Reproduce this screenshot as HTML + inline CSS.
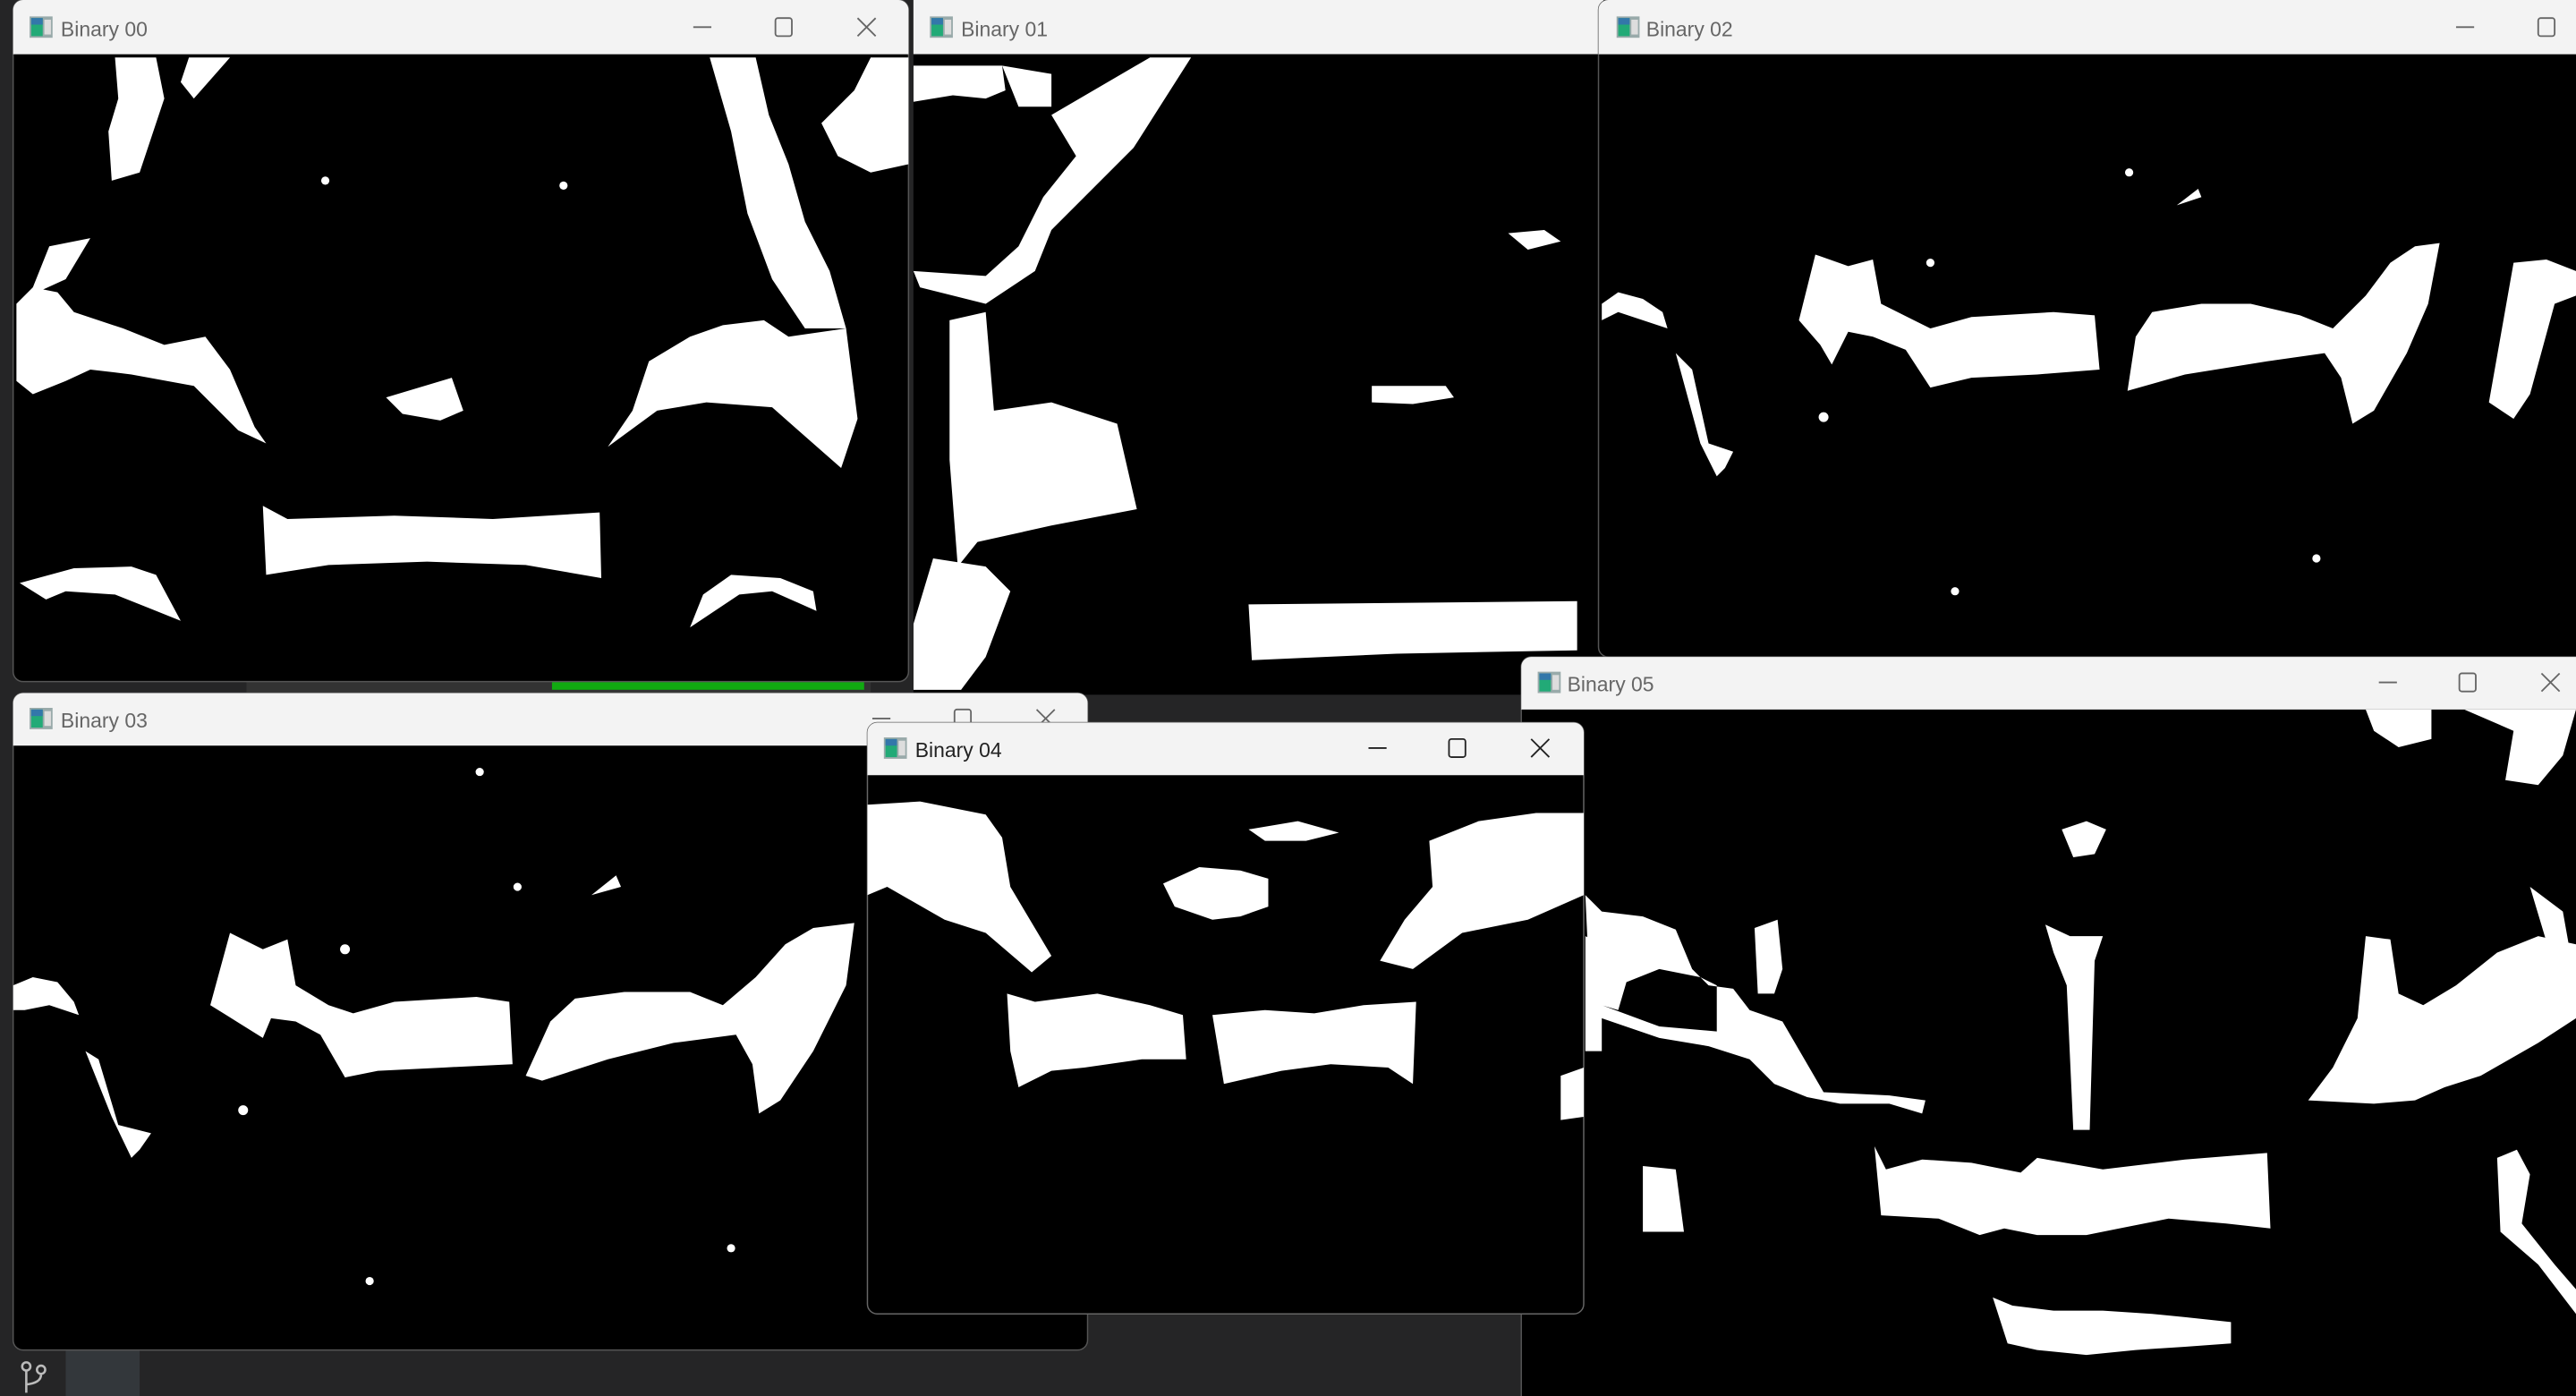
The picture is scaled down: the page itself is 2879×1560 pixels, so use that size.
<!DOCTYPE html>
<html><head><meta charset="utf-8"><style>
html,body{margin:0;padding:0;background:#252526;width:2879px;height:1560px;overflow:hidden}
svg{display:block}
text{font-family:"Liberation Sans",sans-serif;font-size:12.5px}
</style></head><body>
<svg width="2879" height="1560" viewBox="0 0 1568 850" preserveAspectRatio="none" xmlns="http://www.w3.org/2000/svg">
<defs>
<clipPath id="c00"><rect x="8" y="33" width="545" height="382"/></clipPath>
<clipPath id="c01"><rect x="556" y="33" width="420" height="390"/></clipPath>
<clipPath id="c02"><rect x="973" y="33" width="600" height="367"/></clipPath>
<clipPath id="c03"><rect x="8" y="454" width="654" height="368"/></clipPath>
<clipPath id="c05"><rect x="926" y="432" width="650" height="420"/></clipPath>
<clipPath id="c04"><rect x="528" y="472" width="436" height="328"/></clipPath>
<g id="icon"><rect x="0" y="0" width="14" height="13" fill="#9aa"/><rect x="1" y="1" width="7" height="11" fill="#2a7"/><rect x="1" y="1" width="7" height="4" fill="#37a"/><rect x="9" y="2" width="4" height="9" fill="#ddd"/></g>
</defs>
<rect width="1568" height="850" fill="#252526"/>
<rect x="40" y="822" width="45" height="28" fill="#33373b"/>
<rect x="150" y="414" width="380" height="10" fill="#333"/>
<rect x="336" y="414" width="190" height="6" fill="#1a1"/>
<g stroke="#bbb" stroke-width="1.4" fill="none"><circle cx="16" cy="832" r="2.5"/><circle cx="25" cy="834" r="2.5"/><path d="M16 835 V848 M25 837 Q25 842 16 843"/></g>

<!-- Binary 01 -->
<rect x="556" y="0" width="420" height="33" fill="#f3f3f3"/>
<rect x="556" y="33" width="420" height="390" fill="#000"/>
<g clip-path="url(#c01)" fill="#fff">
<polygon points="556,40 610,40 612,55 600,60 580,58 556,62"/>
<polygon points="610,40 640,45 640,65 620,65"/>
<polygon points="640,70 700,35 725,35 690,90 660,120 640,140 630,165 600,185 560,175 556,165 600,168 620,150 635,120 655,95"/>
<polygon points="578,195 600,190 605,250 640,245 680,258 692,310 640,320 595,330 583,345 578,280"/>
<polygon points="568,340 600,345 615,360 600,400 585,420 556,420 556,380"/>
<polygon points="835,235 880,235 885,242 860,246 835,245"/>
<polygon points="918,142 940,140 950,147 930,152"/>
<polygon points="760,368 960,366 960,396 850,398 762,402"/>
</g>
<use href="#icon" x="566" y="10"/>
<text x="585" y="22" fill="#666">Binary 01</text>

<!-- Binary 00 -->
<rect x="8" y="0" width="545" height="415" rx="6" fill="#000" stroke="#555" stroke-width="0.8"/>
<path d="M8 33 V6 a6 6 0 0 1 6 -6 H547 a6 6 0 0 1 6 6 V33 Z" fill="#f3f3f3"/>
<g clip-path="url(#c00)" fill="#fff">
<polygon points="70,35 95,35 100,60 85,105 68,110 66,80 72,60"/>
<polygon points="115,35 140,35 118,60 110,50"/>
<polygon points="10,185 20,175 35,178 45,190 75,200 100,210 125,205 140,225 155,260 162,270 145,262 118,235 80,228 55,225 40,232 20,240 10,232"/>
<polygon points="18,180 30,150 55,145 40,170"/>
<polygon points="235,242 255,236 275,230 282,250 268,256 245,252"/>
<polygon points="432,35 460,35 468,70 480,100 490,135 505,165 515,200 490,200 470,170 455,130 445,80"/>
<polygon points="500,75 520,55 530,35 553,35 553,100 530,105 510,95"/>
<polygon points="370,272 385,250 395,220 420,205 440,198 465,195 480,205 515,200 522,255 512,285 470,248 430,245 400,250"/>
<polygon points="160,308 175,316 240,314 300,316 365,312 366,352 320,344 260,342 200,344 162,350"/>
<polygon points="12,355 45,346 80,345 95,350 110,378 90,370 70,362 40,360 28,365"/>
<polygon points="420,382 428,362 445,350 475,352 495,360 497,372 470,360 450,362"/>
<circle cx="198" cy="110" r="2.5"/><circle cx="343" cy="113" r="2.5"/>
</g>
<use href="#icon" x="18" y="10"/>
<text x="37" y="22" fill="#666">Binary 00</text>
<g stroke="#666" stroke-width="1" fill="none"><path d="M422 16.5 H433"/><rect x="472" y="11" width="10" height="11" rx="1.5"/><path d="M522 11 L533 22 M533 11 L522 22"/></g>

<!-- Binary 02 -->
<rect x="973" y="0" width="600" height="400" rx="6" fill="#000" stroke="#555" stroke-width="0.8"/>
<path d="M973 33 V6 a6 6 0 0 1 6 -6 H1568 V33 Z" fill="#f3f3f3"/>
<g clip-path="url(#c02)" fill="#fff">
<polygon points="975,185 985,178 1000,182 1012,190 1015,200 1000,195 985,190 975,195"/>
<polygon points="1020,215 1030,225 1040,270 1055,275 1050,285 1045,290 1035,270"/>
<polygon points="1095,195 1105,155 1125,162 1140,158 1145,185 1165,195 1175,200 1200,193 1250,190 1275,192 1278,225 1240,228 1200,230 1175,236 1160,213 1140,205 1125,202 1115,222 1108,210"/>
<polygon points="1300,205 1310,190 1340,185 1370,185 1400,192 1420,200 1440,180 1455,160 1470,150 1485,148 1478,185 1465,215 1445,250 1432,258 1425,230 1415,215 1380,220 1330,228 1295,238"/>
<polygon points="1530,160 1550,158 1568,165 1568,180 1555,185 1540,240 1530,255 1515,245"/>
<circle cx="1296" cy="105" r="2.5"/><circle cx="1175" cy="160" r="2.5"/><circle cx="1190" cy="360" r="2.5"/><circle cx="1410" cy="340" r="2.5"/><circle cx="1110" cy="254" r="3"/>
<polygon points="1325,125 1338,115 1340,120"/>
</g>
<use href="#icon" x="984" y="10"/>
<text x="1002" y="22" fill="#666">Binary 02</text>
<g stroke="#666" stroke-width="1" fill="none"><path d="M1495 16.5 H1506"/><rect x="1545" y="11" width="10" height="11" rx="1.5"/></g>

<!-- Binary 03 -->
<rect x="8" y="422" width="654" height="400" rx="6" fill="#000" stroke="#555" stroke-width="0.8"/>
<path d="M8 454 V428 a6 6 0 0 1 6 -6 H656 a6 6 0 0 1 6 6 V454 Z" fill="#f3f3f3"/>
<g clip-path="url(#c03)" fill="#fff">
<polygon points="8,600 20,595 35,598 45,610 48,618 30,612 15,615 8,615"/>
<polygon points="52,640 60,645 72,685 92,690 85,700 80,705 68,680"/>
<polygon points="128,612 140,568 160,578 175,572 180,600 200,612 215,617 240,610 290,607 310,610 312,648 270,650 230,652 210,656 195,630 180,622 165,620 160,632"/>
<polygon points="320,655 335,622 350,608 380,604 420,604 440,612 460,595 478,575 495,565 520,562 515,600 495,640 475,670 462,678 458,648 448,630 410,635 370,645 330,658"/>
<circle cx="315" cy="540" r="2.5"/><circle cx="210" cy="578" r="3"/><circle cx="225" cy="780" r="2.5"/><circle cx="445" cy="760" r="2.5"/><circle cx="292" cy="470" r="2.5"/><circle cx="148" cy="676" r="3"/>
<polygon points="360,545 375,533 378,540"/>
</g>
<use href="#icon" x="18" y="431"/>
<text x="37" y="443" fill="#666">Binary 03</text>
<g stroke="#666" stroke-width="1" fill="none"><path d="M531 437.5 H542"/><rect x="581" y="432" width="10" height="11" rx="1.5"/><path d="M631 432 L642 443 M642 432 L631 443"/></g>

<!-- Binary 05 -->
<rect x="926" y="400" width="650" height="460" rx="6" fill="#000" stroke="#555" stroke-width="0.8"/>
<path d="M926 432 V406 a6 6 0 0 1 6 -6 H1568 V432 Z" fill="#f3f3f3"/>
<g clip-path="url(#c05)" fill="#fff">
<polygon points="965,545 975,555 1000,558 1020,566 1030,590 1040,600 1055,602 1065,615 1085,622 1110,665 1150,667 1172,670 1170,678 1150,672 1120,672 1100,668 1080,660 1065,645 1040,637 1010,632 975,620 965,615 975,612 1010,625 1045,628 1045,600 1035,595 1010,590 990,598 985,615 968,610"/>
<polygon points="1068,565 1082,560 1085,590 1080,605 1070,605"/>
<polygon points="1245,563 1260,570 1280,570 1275,585 1272,688 1262,688 1258,600 1250,580"/>
<polygon points="1440,570 1455,572 1460,605 1475,612 1495,600 1520,580 1545,570 1568,575 1568,620 1545,635 1510,655 1488,662 1470,670 1445,672 1405,670 1420,650 1435,620"/>
<polygon points="1500,432 1568,432 1560,460 1545,478 1525,475 1530,445"/>
<polygon points="1440,432 1480,432 1480,450 1460,455 1445,445"/>
<polygon points="1255,505 1270,500 1282,505 1275,520 1262,522"/>
<polygon points="1141,698 1148,712 1170,706 1200,708 1230,714 1240,705 1280,712 1330,706 1380,702 1382,748 1355,745 1320,742 1290,748 1270,752 1240,752 1220,748 1205,752 1180,742 1145,740"/>
<polygon points="1213,790 1225,795 1250,798 1280,798 1310,800 1330,802 1358,805 1358,818 1330,820 1300,822 1270,825 1240,822 1222,818"/>
<polygon points="1000,710 1020,712 1025,750 1000,750"/>
<polygon points="1520,705 1532,700 1540,715 1535,745 1555,770 1568,785 1568,800 1545,770 1522,750"/>
<polygon points="965,570 975,575 975,640 965,640"/>
<polygon points="1540,540 1560,555 1568,600 1555,590"/>
</g>
<use href="#icon" x="936" y="409"/>
<text x="954" y="421" fill="#666">Binary 05</text>
<g stroke="#666" stroke-width="1" fill="none"><path d="M1448 415.5 H1459"/><rect x="1497" y="410" width="10" height="11" rx="1.5"/><path d="M1547 410 L1558 421 M1558 410 L1547 421"/></g>

<!-- Binary 04 -->
<rect x="528" y="440" width="436" height="360" rx="6" fill="#000" stroke="#666" stroke-width="0.8"/>
<path d="M528 472 V446 a6 6 0 0 1 6 -6 H958 a6 6 0 0 1 6 6 V472 Z" fill="#f3f3f3"/>
<g clip-path="url(#c04)" fill="#fff">
<polygon points="528,490 560,488 600,496 610,510 615,540 640,582 628,592 600,568 575,560 540,540 528,545"/>
<polygon points="708,538 730,528 755,530 772,535 772,552 755,558 738,560 715,552"/>
<polygon points="760,505 790,500 815,507 795,512 770,512"/>
<polygon points="840,585 855,560 872,540 870,512 900,500 935,495 964,495 964,545 930,560 890,568 860,590"/>
<polygon points="613,605 630,610 668,605 700,612 720,618 722,645 695,645 660,650 640,652 620,662 615,640"/>
<polygon points="738,618 770,615 800,617 830,612 862,610 860,660 845,650 810,648 780,652 745,660"/>
<polygon points="950,655 964,650 964,680 950,682"/>
</g>
<use href="#icon" x="538" y="449"/>
<text x="557" y="461" fill="#222">Binary 04</text>
<g stroke="#222" stroke-width="1" fill="none"><path d="M833 455.5 H844"/><rect x="882" y="450" width="10" height="11" rx="1.5"/><path d="M932 450 L943 461 M943 450 L932 461"/></g>
</svg>
</body></html>
